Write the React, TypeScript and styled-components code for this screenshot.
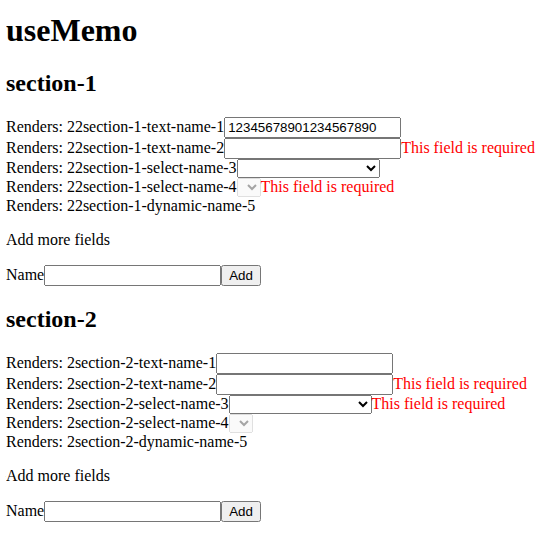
import { createGlobalStyle } from 'styled-components';
import styled from 'styled-components';

// page defaults: a plain serif document
const GlobalStyle = createGlobalStyle`
  body {
    margin: 8px 6px;
    font-family: 'Liberation Serif', 'Times New Roman', serif;
    font-size: 16px;
    color: #000;
    background: #fff;
  }
  input, select, button {
    font-family: 'Liberation Sans', Arial, sans-serif;
    font-size: 13.3333px;
  }
`;

type FieldTypes = {
  kind: 'text' | 'select' | 'dynamic';
  name: string;
  value?: string;
  disabled?: boolean;
  error?: boolean;
};

type SectionTypes = {
  id: string;
  renders: number;
  fields: FieldTypes[];
};

const sections: SectionTypes[] = [
  {
    id: 'section-1',
    renders: 22,
    fields: [
      { kind: 'text', name: 'text-name-1', value: '12345678901234567890' },
      { kind: 'text', name: 'text-name-2', error: true },
      { kind: 'select', name: 'select-name-3' },
      { kind: 'select', name: 'select-name-4', disabled: true, error: true },
      { kind: 'dynamic', name: 'dynamic-name-5' },
    ],
  },
  {
    id: 'section-2',
    renders: 2,
    fields: [
      { kind: 'text', name: 'text-name-1' },
      { kind: 'text', name: 'text-name-2', error: true },
      { kind: 'select', name: 'select-name-3', error: true },
      { kind: 'select', name: 'select-name-4', disabled: true },
      { kind: 'dynamic', name: 'dynamic-name-5' },
    ],
  },
];

const App = () => {
  return (
    <>
      <GlobalStyle />
      <Title>useMemo</Title>
      {sections.map((_section) => (
        <section key={_section.id}>
          <SectionTitle>{_section.id}</SectionTitle>
          {_section.fields.map((_field) => (
            <FieldRow key={_field.name}>
              Renders: {_section.renders}
              {_section.id}-{_field.name}
              {_field.kind === 'text' && <TextInput type="text" defaultValue={_field.value} />}
              {_field.kind === 'select' && (
                <Select $small={_field.disabled} disabled={_field.disabled} defaultValue="">
                  {!_field.disabled && <option value="" />}
                </Select>
              )}
              {_field.error && <ErrorText>This field is required</ErrorText>}
            </FieldRow>
          ))}
          <Note>Add more fields</Note>
          <AddRow>
            Name
            <TextInput type="text" />
            <AddButton type="button">Add</AddButton>
          </AddRow>
        </section>
      ))}
    </>
  );
};

const Title = styled.h1`
  font-size: 2em;
  font-weight: bold;
  margin: 4px 0 0.67em;
`;

const SectionTitle = styled.h2`
  font-size: 1.5em;
  font-weight: bold;
  margin: 0.83em 0;
`;

const FieldRow = styled.div`
  display: block;
`;

const TextInput = styled.input`
  width: 177px;
  box-sizing: border-box;
`;

const Select = styled.select<{ $small?: boolean }>`
  width: ${(p) => (p.$small ? '24px' : '143px')};
`;

const ErrorText = styled.span`
  color: red;
`;

const Note = styled.p`
  margin: 1em 0;
`;

const AddRow = styled.div`
  display: block;
`;

const AddButton = styled.button`
  margin: 0;
`;

export default App;
